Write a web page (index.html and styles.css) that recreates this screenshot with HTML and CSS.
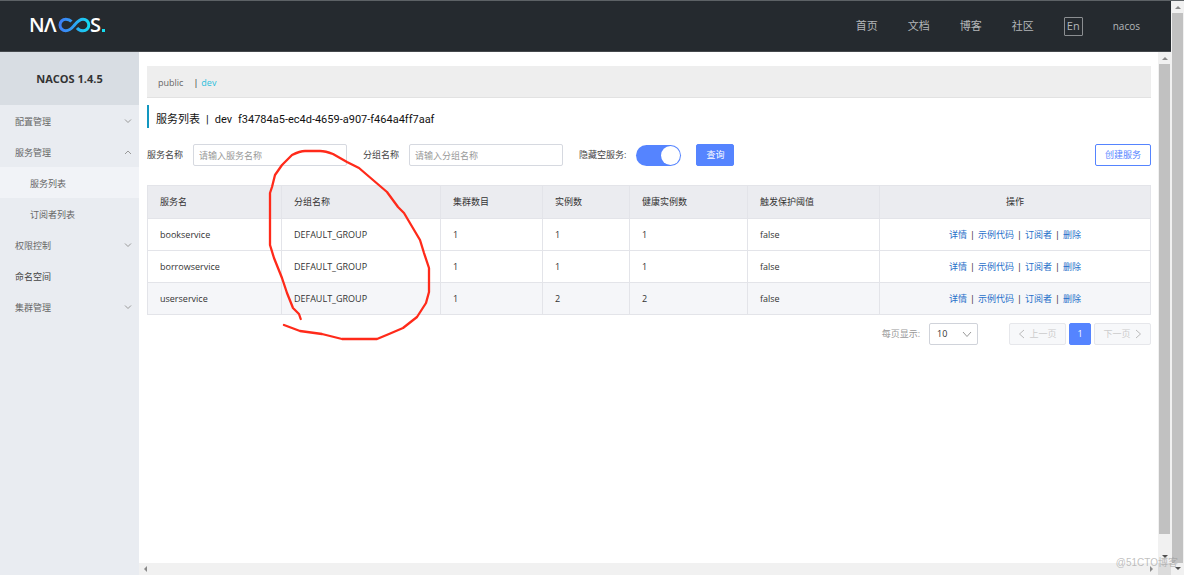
FILE: index.html
```html
<!DOCTYPE html>
<html lang="zh-CN">
<head>
<meta charset="utf-8">
<title>Nacos</title>
<link rel="stylesheet" href="styles.css">
</head>
<body>
<div class="page">
  <div class="app">
    <header class="header">
      <a class="logo" href="#" aria-label="Nacos">
        <svg width="80" height="40" viewBox="-2 -9 80 40">
          <defs>
            <linearGradient id="loop" x1="28" y1="0" x2="60" y2="0" gradientUnits="userSpaceOnUse">
              <stop offset="0" stop-color="#3f7cf6"/>
              <stop offset="0.45" stop-color="#2fa0f5"/>
              <stop offset="1" stop-color="#12e0f0"/>
            </linearGradient>
          </defs>
          <text class="logo-text" x="-2" y="17">N</text>
          <text class="logo-text" x="13" y="17">Λ</text>
          <path d="M40.500 6.500C39 4.800 37 4.200 34.800 4.200A5.800 5.800 0 0 0 34.800 15.800C39 15.800 41 13 43.500 10C46 7 48 4.200 52 4.200A5.800 5.800 0 0 1 52 15.800C49.500 15.800 47.500 14.800 46 13" fill="none" stroke="url(#loop)" stroke-width="3"/>
          <text class="logo-text" x="59" y="17">S</text>
          <rect x="71" y="14" width="3" height="3" fill="#16dcf0"/>
        </svg>
      </a>
      <nav class="nav">
        <a href="#">首页</a>
        <a href="#">文档</a>
        <a href="#">博客</a>
        <a href="#">社区</a>
        <button class="lang" type="button">En</button>
        <a class="user" href="#">nacos</a>
      </nav>
    </header>
    <div class="body">
      <aside class="side">
        <h1 class="version">NACOS 1.4.5</h1>
        <ul class="menu">
          <li><a href="#">配置管理<svg class="chev" viewBox="0 0 8 5"><path d="M1 .5l3 3 3-3"/></svg></a></li>
          <li><a href="#">服务管理<svg class="chev" viewBox="0 0 8 5"><path d="M1 4l3-3 3 3"/></svg></a></li>
          <li><a class="sub active" href="#">服务列表</a></li>
          <li><a class="sub" href="#">订阅者列表</a></li>
          <li><a href="#">权限控制<svg class="chev" viewBox="0 0 8 5"><path d="M1 .5l3 3 3-3"/></svg></a></li>
          <li><a class="strong" href="#">命名空间</a></li>
          <li><a href="#">集群管理<svg class="chev" viewBox="0 0 8 5"><path d="M1 .5l3 3 3-3"/></svg></a></li>
        </ul>
      </aside>
      <div class="pane">
        <main class="main">
          <div class="spaces">
            <a class="space" href="#">public</a><span class="bar">|</span><a class="space on" href="#">dev</a>
          </div>
          <h2 class="title"><span>服务列表</span><span>|</span><span>dev</span><span>f34784a5-ec4d-4659-a907-f464a4ff7aaf</span></h2>
          <form class="filters">
            <label for="svc">服务名称</label>
            <input class="text" id="svc" type="text" placeholder="请输入服务名称">
            <label class="next" for="grp">分组名称</label>
            <input class="text" id="grp" type="text" placeholder="请输入分组名称">
            <label class="next" for="hide">隐藏空服务:</label>
            <input class="switch" id="hide" type="checkbox" role="switch" checked>
            <button class="btn primary" type="button">查询</button>
            <button class="btn outline" type="button">创建服务</button>
          </form>
          <table class="table">
            <colgroup><col class="c1"><col class="c2"><col class="c3"><col class="c4"><col class="c5"><col class="c6"><col></colgroup>
            <thead>
              <tr><th>服务名</th><th>分组名称</th><th>集群数目</th><th>实例数</th><th>健康实例数</th><th>触发保护阈值</th><th class="ops">操作</th></tr>
            </thead>
            <tbody>
              <tr><td>bookservice</td><td>DEFAULT_GROUP</td><td>1</td><td>1</td><td>1</td><td>false</td><td class="ops"><a href="#">详情</a><i>|</i><a href="#">示例代码</a><i>|</i><a href="#">订阅者</a><i>|</i><a href="#">删除</a></td></tr>
              <tr><td>borrowservice</td><td>DEFAULT_GROUP</td><td>1</td><td>1</td><td>1</td><td>false</td><td class="ops"><a href="#">详情</a><i>|</i><a href="#">示例代码</a><i>|</i><a href="#">订阅者</a><i>|</i><a href="#">删除</a></td></tr>
              <tr class="hover"><td>userservice</td><td>DEFAULT_GROUP</td><td>1</td><td>2</td><td>2</td><td>false</td><td class="ops"><a href="#">详情</a><i>|</i><a href="#">示例代码</a><i>|</i><a href="#">订阅者</a><i>|</i><a href="#">删除</a></td></tr>
            </tbody>
          </table>
          <div class="pager">
            <label for="size">每页显示:</label>
            <span class="select">
              <select id="size"><option>10</option><option>20</option></select>
              <svg viewBox="0 0 10 7"><path d="M1 1l4 4.500L9 1"/></svg>
            </span>
            <button class="btn off" type="button" disabled><svg viewBox="0 0 7 10"><path d="M6 1L1.500 5 6 9"/></svg>上一页</button>
            <button class="btn current" type="button">1</button>
            <button class="btn off" type="button" disabled>下一页<svg viewBox="0 0 7 10"><path d="M1 1l4.500 4L1 9"/></svg></button>
          </div>
          <svg class="scribble" width="164" height="194" viewBox="0 0 164 194"><path d="M30.700 168L29 163 23 157 17 142 12 127 4 107 0 94 0 42 2 36 5 24 12 14 22 4C28 1 31 0 35 0L50 0C54 0 58 1 63 3L77 11 89 17 117 41 128 56 134 62 150 89 154 102 159 117 159 141 156 152 147 166 133 177 119 183 107 188 72 188 52 183 30 180 14 174"/></svg>
        </main>
        <div class="vbar inner"><span class="arrow up"></span><span class="thumb"></span><span class="arrow down"></span></div>
        <div class="hbar"><span class="arrow left"></span><span class="arrow right"></span></div>
        <div class="corner"></div>
      </div>
    </div>
  </div>
  <div class="vbar outer"><span class="arrow up"></span><span class="thumb"></span><span class="arrow down"></span></div>
  <div class="watermark">@51CTO博客</div>
</div>
</body>
</html>
```

FILE: styles.css
```css
* { box-sizing: border-box; }
body {
  margin: 0;
  color: #333;
  font: 9px/16px "Open Sans", "Noto Sans CJK SC", sans-serif;
}
a { color: inherit; text-decoration: none; }
button, input, select { font: inherit; margin: 0; }
svg { display: block; }

.page {
  position: relative;
  display: grid;
  grid-template-columns: 1fr 13px;
  height: 100vh;
  border-top: 1px solid #5d6266;
  overflow: hidden;
}
.app { display: flex; flex-direction: column; min-width: 0; }

.header {
  display: flex;
  align-items: center;
  justify-content: space-between;
  height: 51px;
  padding: 0 31px 0 29px;
  background: #252a2f;
  border-bottom: 1px solid #45494d;
}
.logo-text { fill: #fff; font: 600 20px "Open Sans", sans-serif; }
.nav { display: flex; align-items: center; gap: 30px; color: #b4b7b9; font-size: 11px; }
.nav .user { font-size: 10px; }
.lang {
  width: 19px;
  height: 19px;
  padding: 0;
  color: #b4b7b9;
  font-size: 11px;
  line-height: 16px;
  background: none;
  border: 1px solid #8b8e91;
  border-radius: 1px;
}

.body { display: flex; flex: 1; min-height: 0; }
.side { width: 139px; flex: none; background: #e9ecf1; }
.version {
  margin: 0;
  padding: 18px 0 17px;
  font-size: 11px;
  line-height: 18px;
  text-align: center;
  background: #d8dde3;
}
.menu { margin: 0; padding: 0; list-style: none; color: #666; }
.menu a {
  display: flex;
  align-items: center;
  justify-content: space-between;
  height: 31px;
  padding: 3px 7px 0 15px;
}
.menu .sub { padding-left: 30px; }
.menu .active { background: #f1f3f7; }
.menu .strong { color: #444; }
.chev { width: 8px; height: 5px; margin-bottom: 2px; fill: none; stroke: #999; }

.pane {
  display: grid;
  flex: 1;
  grid-template: 1fr 12px / 1fr 13px;
  min-width: 0;
}
.main { position: relative; padding: 14px 7px 0 8px; background: #fff; }

.spaces {
  display: flex;
  align-items: center;
  height: 32px;
  padding: 2px 11px 0;
  background: #eee;
  border-bottom: 1px solid #e2e2e2;
}
.space { color: #666; }
.bar { margin: 0 3px 0 10px; }
.on { color: #2cbfdc; }

.title {
  display: flex;
  gap: 6px;
  height: 23px;
  margin: 7px 0 16px;
  padding: 5px 0 0 7px;
  color: #111;
  font: 400 11px/20px Roboto, "Noto Sans CJK SC", sans-serif;
  border-left: 2px solid #1297c0;
}

.filters { display: flex; align-items: center; color: #444; }
.text {
  width: 154px;
  height: 22px;
  margin-left: 10px;
  padding: 0 5px;
  border: 1px solid #d6d9e0;
  border-radius: 2px;
}
.text::placeholder { color: #999; }
.next { margin-left: 16px; }
.switch {
  display: flex;
  width: 45px;
  height: 21px;
  margin: 0 15px 0 10px;
  padding: 1px;
  appearance: none;
  justify-content: flex-end;
  background: #5584ff;
  border-radius: 11px;
}
.switch::before { width: 19px; height: 19px; background: #fff; border-radius: 50%; content: ""; }
.btn {
  display: flex;
  align-items: center;
  justify-content: center;
  gap: 4px;
  height: 22px;
  padding: 0 9px;
  border: 1px solid #5584ff;
  border-radius: 2px;
}
.primary, .current { color: #fff; background: #5584ff; }
.outline { margin-left: auto; color: #5584ff; background: #fff; }

.table {
  width: 100%;
  margin-top: 19px;
  table-layout: fixed;
  border-collapse: collapse;
}
.c1 { width: 134px; }
.c2 { width: 159px; }
.c3 { width: 102px; }
.c4 { width: 87px; }
.c5 { width: 118px; }
.c6 { width: 132px; }
.table th, .table td {
  padding: 8px 12px;
  font-weight: 400;
  text-align: left;
  border: 1px solid #e3e4e9;
  border-width: 1px 0 1px 1px;
}
.table th { background: #ebecf0; }
.table td { padding: 8px 12px 7px; }
.table tr > :last-child { border-right-width: 1px; }
.table .ops { text-align: center; }
.ops a { color: #1f6fc9; }
.ops i { margin: 0 3px; color: #222; font-style: normal; }
.hover { background: #f5f6f9; }

.pager { display: flex; align-items: center; justify-content: flex-end; gap: 3px; margin-top: 8px; color: #999; }
.select { position: relative; width: 49px; margin: 0 28px 0 6px; }
.select select {
  display: block;
  width: 100%;
  height: 22px;
  padding: 0 7px;
  color: #333;
  appearance: none;
  background: #fff;
  border: 1px solid #d0d3da;
  border-radius: 2px;
}
.select svg { position: absolute; top: 8px; right: 6px; width: 10px; height: 7px; fill: none; stroke: #999; }
.off { width: 57px; padding: 0; color: #ccc; background: #f7f8fa; border-color: #e6e7eb; }
.off svg { width: 7px; height: 10px; fill: none; stroke: #bbb; }
.current { width: 22px; }

.scribble {
  position: absolute;
  top: 99px;
  left: 131px;
  overflow: visible;
  fill: none;
  stroke: #ff2a1a;
  stroke-width: 2.300;
  stroke-linecap: round;
  stroke-linejoin: round;
  pointer-events: none;
}

.vbar { display: flex; flex-direction: column; align-items: center; gap: 4px; padding: 5px 1px; background: #f1f1f1; }
.thumb { flex: 1; align-self: stretch; background: #c1c1c1; }
.inner .thumb { margin-bottom: 17px; }
.hbar { display: flex; align-items: center; justify-content: space-between; padding: 0 5px; background: #f1f1f1; }
.corner { background: #dcdcdc; }
.arrow { border: 3px solid transparent; }
.up { border-top: 0; border-bottom-color: #8a8a8a; }
.down { border-bottom: 0; border-top-color: #505050; }
.left { border-left: 0; border-right-color: #8a8a8a; }
.right { border-right: 0; border-left-color: #8a8a8a; }
.watermark {
  position: absolute;
  right: 6px;
  bottom: 4px;
  color: rgba(150, 150, 150, 0.6);
  font: 10px/16px "Liberation Sans", "Noto Sans CJK SC", sans-serif;
}
```
